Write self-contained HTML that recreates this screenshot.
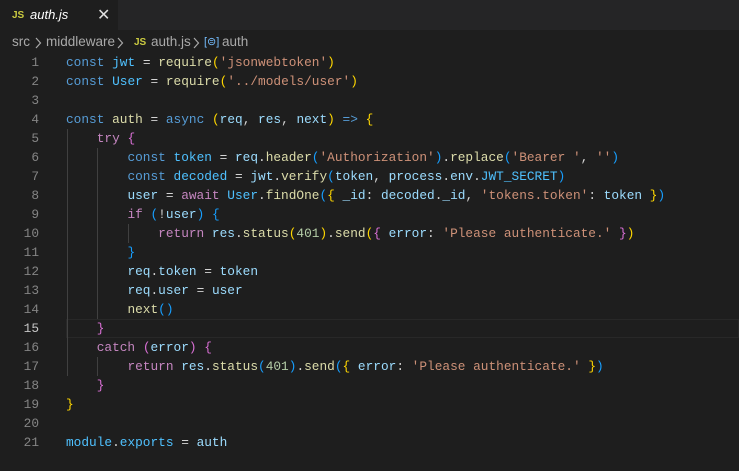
<!DOCTYPE html>
<html><head><meta charset="utf-8"><style>
*{margin:0;padding:0;box-sizing:border-box}
body{width:739px;height:451px;background:#1e1e1e;overflow:hidden;font-family:"Liberation Sans",sans-serif;position:relative}
.tabbar{position:absolute;left:0;top:0;width:739px;height:30px;background:#252526}
.tab{position:absolute;left:0;top:0;width:118px;height:30px;background:#1e1e1e;color:#fff}
.js{color:#cbcb41;font-weight:bold;font-size:10px;position:absolute;top:10px}
.tabname{position:absolute;left:30px;top:7px;font-size:13px;font-style:italic}
.x{position:absolute;left:97px;top:5px;font-size:16px;color:#ddd}
.bc{position:absolute;top:34px;font-size:13.5px;color:#a9a9a9;white-space:pre}
.code{position:absolute;left:0;top:53px;font-family:"Liberation Mono",monospace;font-size:12.8px;line-height:19px;white-space:pre;color:#d4d4d4}
.ln{position:absolute;left:0;width:39px;text-align:right;color:#858585}
.l{position:absolute;left:66px}
.cur{position:absolute;left:66px;top:319px;width:673px;height:19px;border:1px solid #282828}
.g{position:absolute;width:1px;background:#404040}
.k{color:#569cd6}.c{color:#4fc1ff}.f{color:#dcdcaa}.s{color:#ce9178}.p{color:#c586c0}.v{color:#9cdcfe}.n{color:#b5cea8}
.y{color:#ffd700}.m{color:#da70d6}.b{color:#179fff}
svg.ch{position:absolute;top:37px}
</style></head><body>
<div class="tabbar"><div class="tab"><span class="js" style="left:12px">JS</span><span class="tabname">auth.js</span><span class="x">✕</span></div></div>
<div class="bc" style="left:12px">src</div>
<svg class="ch" style="left:34px" width="8" height="12"><path d="M2 1 L6.5 6 L2 11" stroke="#a9a9a9" stroke-width="1.2" fill="none"/></svg>
<div class="bc" style="left:46px">middleware</div>
<svg class="ch" style="left:116px" width="8" height="12"><path d="M2 1 L6.5 6 L2 11" stroke="#a9a9a9" stroke-width="1.2" fill="none"/></svg>
<div class="bc" style="left:134px;top:37px;color:#cbcb41;font-weight:bold;font-size:10px">JS</div>
<div class="bc" style="left:151px">auth.js</div>
<svg class="ch" style="left:192px" width="8" height="12"><path d="M2 1 L6.5 6 L2 11" stroke="#a9a9a9" stroke-width="1.2" fill="none"/></svg>
<div class="bc" style="left:204px;top:35px;color:#75beff;font-size:11px">[⊜]</div>
<div class="bc" style="left:222px">auth</div>
<div class="cur"></div>
<div class="g" style="left:67px;top:129px;height:247px"></div>
<div class="g" style="left:97px;top:148px;height:171px"></div>
<div class="g" style="left:97px;top:357px;height:19px"></div>
<div class="g" style="left:128px;top:224px;height:19px"></div>
<div class="code">
<div class="ln" style="top:0">1</div><div class="l" style="top:0"><span class="k">const</span> <span class="c">jwt</span> = <span class="f">require</span><span class="y">(</span><span class="s">'jsonwebtoken'</span><span class="y">)</span></div>
<div class="ln" style="top:19px">2</div><div class="l" style="top:19px"><span class="k">const</span> <span class="c">User</span> = <span class="f">require</span><span class="y">(</span><span class="s">'../models/user'</span><span class="y">)</span></div>
<div class="ln" style="top:38px">3</div>
<div class="ln" style="top:57px">4</div><div class="l" style="top:57px"><span class="k">const</span> <span class="f">auth</span> = <span class="k">async</span> <span class="y">(</span><span class="v">req</span>, <span class="v">res</span>, <span class="v">next</span><span class="y">)</span> <span class="k">=&gt;</span> <span class="y">{</span></div>
<div class="ln" style="top:76px">5</div><div class="l" style="top:76px">    <span class="p">try</span> <span class="m">{</span></div>
<div class="ln" style="top:95px">6</div><div class="l" style="top:95px">        <span class="k">const</span> <span class="c">token</span> = <span class="v">req</span>.<span class="f">header</span><span class="b">(</span><span class="s">'Authorization'</span><span class="b">)</span>.<span class="f">replace</span><span class="b">(</span><span class="s">'Bearer '</span>, <span class="s">''</span><span class="b">)</span></div>
<div class="ln" style="top:114px">7</div><div class="l" style="top:114px">        <span class="k">const</span> <span class="c">decoded</span> = <span class="v">jwt</span>.<span class="f">verify</span><span class="b">(</span><span class="v">token</span>, <span class="v">process</span>.<span class="v">env</span>.<span class="c">JWT_SECRET</span><span class="b">)</span></div>
<div class="ln" style="top:133px">8</div><div class="l" style="top:133px">        <span class="v">user</span> = <span class="p">await</span> <span class="c">User</span>.<span class="f">findOne</span><span class="b">(</span><span class="y">{</span> <span class="v">_id</span>: <span class="v">decoded</span>.<span class="v">_id</span>, <span class="s">'tokens.token'</span>: <span class="v">token</span> <span class="y">}</span><span class="b">)</span></div>
<div class="ln" style="top:152px">9</div><div class="l" style="top:152px">        <span class="p">if</span> <span class="b">(</span>!<span class="v">user</span><span class="b">)</span> <span class="b">{</span></div>
<div class="ln" style="top:171px">10</div><div class="l" style="top:171px">            <span class="p">return</span> <span class="v">res</span>.<span class="f">status</span><span class="y">(</span><span class="n">401</span><span class="y">)</span>.<span class="f">send</span><span class="y">(</span><span class="m">{</span> <span class="v">error</span>: <span class="s">'Please authenticate.'</span> <span class="m">}</span><span class="y">)</span></div>
<div class="ln" style="top:190px">11</div><div class="l" style="top:190px">        <span class="b">}</span></div>
<div class="ln" style="top:209px">12</div><div class="l" style="top:209px">        <span class="v">req</span>.<span class="v">token</span> = <span class="v">token</span></div>
<div class="ln" style="top:228px">13</div><div class="l" style="top:228px">        <span class="v">req</span>.<span class="v">user</span> = <span class="v">user</span></div>
<div class="ln" style="top:247px">14</div><div class="l" style="top:247px">        <span class="f">next</span><span class="b">()</span></div>
<div class="ln" style="top:266px;color:#c6c6c6">15</div><div class="l" style="top:266px">    <span class="m">}</span></div>
<div class="ln" style="top:285px">16</div><div class="l" style="top:285px">    <span class="p">catch</span> <span class="m">(</span><span class="v">error</span><span class="m">)</span> <span class="m">{</span></div>
<div class="ln" style="top:304px">17</div><div class="l" style="top:304px">        <span class="p">return</span> <span class="v">res</span>.<span class="f">status</span><span class="b">(</span><span class="n">401</span><span class="b">)</span>.<span class="f">send</span><span class="b">(</span><span class="y">{</span> <span class="v">error</span>: <span class="s">'Please authenticate.'</span> <span class="y">}</span><span class="b">)</span></div>
<div class="ln" style="top:323px">18</div><div class="l" style="top:323px">    <span class="m">}</span></div>
<div class="ln" style="top:342px">19</div><div class="l" style="top:342px"><span class="y">}</span></div>
<div class="ln" style="top:361px">20</div>
<div class="ln" style="top:380px">21</div><div class="l" style="top:380px"><span class="c">module</span>.<span class="c">exports</span> = <span class="v">auth</span></div>
</div>
</body></html>
